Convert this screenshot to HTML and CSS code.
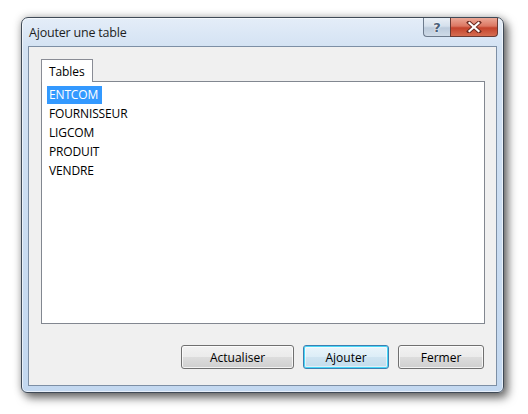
FILE: index.html
```html
<!DOCTYPE html>
<html>
<head>
<meta charset="utf-8">
<link rel="stylesheet" href="styles.css">
</head>
<body>
<div class="window">
  <div class="titlebar">
    <div class="title">Ajouter une table</div>
    <div class="caption-buttons">
      <div class="cap-btn help">?</div>
      <div class="cap-btn close">
        <svg width="16" height="12" viewBox="0 0 16 12"><path d="M3 1.5 L13 10.5 M13 1.5 L3 10.5" stroke="#6b2a20" stroke-width="4" stroke-linecap="square"/><path d="M3.5 2 L12.5 10 M12.5 2 L3.5 10" stroke="#ffffff" stroke-width="2.2" stroke-linecap="square"/></svg>
      </div>
    </div>
  </div>
  <div class="client">
    <div class="tabs">
      <div class="tab">Tables</div>
    </div>
    <ul class="listbox">
      <li><span class="sel">ENTCOM</span></li>
      <li><span>FOURNISSEUR</span></li>
      <li><span>LIGCOM</span></li>
      <li><span>PRODUIT</span></li>
      <li><span>VENDRE</span></li>
    </ul>
    <div class="actions">
      <button class="btn wide">Actualiser</button>
      <button class="btn default">Ajouter</button>
      <button class="btn">Fermer</button>
    </div>
  </div>
</div>
</body>
</html>
```

FILE: styles.css
```css
* { box-sizing: border-box; }
html, body { margin: 0; padding: 0; background: #ffffff; }
body {
  font-family: "Open Sans", "Noto Sans", sans-serif;
  font-size: 12px;
  color: #000;
  width: 528px;
  height: 414px;
  overflow: hidden;
}
.window {
  margin: 17px 0 0 21px;
  width: 483px;
  height: 376px;
  border: 1px solid #3f4a57;
  border-radius: 7px 7px 6px 6px;
  background: linear-gradient(#e4edf8, #d3e2f3 30px, #c3d8f0 100%);
  box-shadow: 4px 5px 10px rgba(0,0,0,0.55), 0 0 8px rgba(0,0,0,0.25), inset 0 0 0 1px rgba(255,255,255,0.6);
  padding: 0 6px 6px 6px;
  display: flex;
  flex-direction: column;
}
.titlebar {
  height: 28px;
  display: flex;
  align-items: center;
  padding-left: 1px;
}
.title {
  flex: 1;
  font-size: 12.5px;
  color: #1e1e1e;
  letter-spacing: -0.2px;
  padding-top: 1px;
}
.caption-buttons {
  align-self: flex-start;
  display: flex;
  height: 19px;
  margin-right: -1px;
}
.cap-btn {
  height: 19px;
  border: 1px solid #6d7b8d;
  border-top: none;
  display: flex;
  align-items: center;
  justify-content: center;
}
.help {
  width: 27px;
  border-radius: 0 0 0 4px;
  border-right: none;
  background: linear-gradient(#e9eff6, #d5e0ec 45%, #bccbdc 55%, #cfdbe8);
  color: #4a5f78;
  font-family: "DejaVu Sans", sans-serif;
  font-weight: bold;
  font-size: 13px;
  text-shadow: 0 0 2px #fff, 0 0 1px #fff;
}
.close {
  width: 48px;
  border-radius: 0 0 4px 0;
  border-color: #6a3a33;
  background: linear-gradient(#eba897, #dc7762 45%, #c4432c 55%, #d66d51);
}
.client {
  flex: 1;
  border: 1px solid #7d8fa5;
  background: #f0f0f0;
  padding: 12px 12px 0 12px;
  display: flex;
  flex-direction: column;
}
.tabs {
  display: flex;
  height: 22px;
}
.tab {
  width: 52px;
  height: 23px;
  border: 1px solid #898c95;
  border-bottom: none;
  background: #ffffff;
  font-size: 12px;
  letter-spacing: -0.1px;
  padding: 3px 0 0 7px;
  position: relative;
  z-index: 1;
}
.listbox {
  list-style: none;
  margin: 0;
  width: 444px;
  height: 243px;
  border: 1px solid #828790;
  background: #ffffff;
  padding: 4px 5px;
}
.listbox li {
  height: 19px;
  font-size: 12px;
  letter-spacing: -0.15px;
}
.listbox li span {
  display: inline-block;
  height: 18px;
  line-height: 18px;
  padding: 0 2px;
}
.listbox li span.sel {
  background: #3399ff;
  color: #ffffff;
  padding: 0 4px 0 2px;
}
.actions {
  display: flex;
  justify-content: flex-end;
  gap: 9px;
  margin-top: 21px;
  padding-right: 0;
}
.btn {
  width: 86px;
  height: 24px;
  border: 1px solid #707070;
  border-radius: 3px;
  background: linear-gradient(#f2f2f2, #ebebeb 50%, #dddddd 50%, #cfcfcf);
  box-shadow: inset 0 0 0 1px rgba(255,255,255,0.75);
  font-family: "Open Sans", "Noto Sans", sans-serif;
  font-size: 12px;
  color: #000;
  padding: 0;
}
.btn.wide { width: 113px; }
.btn.default {
  border-color: #3c7fb1;
  background: linear-gradient(#eaf5fb, #dcedf7 50%, #cfe4f1 50%, #c2dcec);
  box-shadow: inset 0 0 0 1px #48d7f8, inset 0 0 0 2px rgba(255,255,255,0.5);
}
```
